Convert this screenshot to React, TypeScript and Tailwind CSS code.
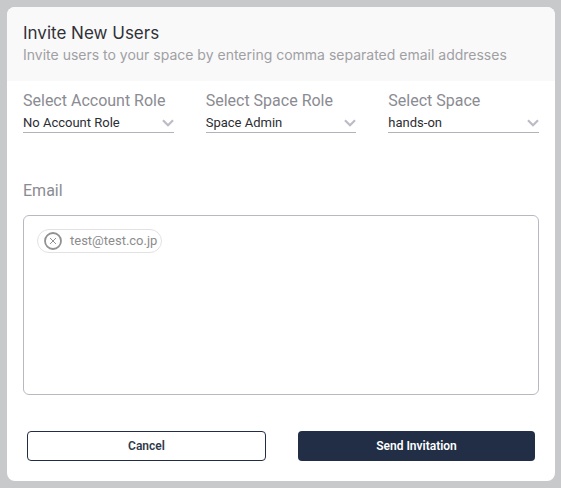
import { useState } from "react";

type RoleSelectProps = { id: string; label: string; options: string[] };

function RoleSelect({ id, label, options }: RoleSelectProps) {
  return (
    <div className="min-w-0 flex-1">
      <label htmlFor={id} className="block text-base leading-6 whitespace-nowrap text-[#8b8b92]">
        {label}
      </label>
      <div className="grid items-center border-b border-[#b3b2ba]">
        <select
          id={id}
          className="col-start-1 row-start-1 h-[19px] w-full appearance-none bg-transparent pr-4 text-[13px] leading-5 text-[#2c2d33] outline-none"
        >
          {options.map((option) => (
            <option key={option}>{option}</option>
          ))}
        </select>
        <svg
          className="pointer-events-none col-start-1 row-start-1 h-2 w-3 justify-self-end"
          viewBox="0 0 12 8"
          fill="none"
          stroke="#bdbcc6"
          strokeWidth="2.2"
          aria-hidden="true"
        >
          <path d="M1 1.2 6 6.2 11 1.2" />
        </svg>
      </div>
    </div>
  );
}

export default function App() {
  const [emails, setEmails] = useState(["test@test.co.jp"]);

  return (
    <div className="min-h-screen bg-[#c8c9ca] py-[7px] pr-[6px] pl-[7px] font-['Roboto',sans-serif]">
      <main className="overflow-hidden rounded-lg bg-white pb-5">
        <header className="bg-[#f9f9f9] px-4 pt-3.5 pb-4 font-['Inter',sans-serif]">
          <h1 className="text-[17px] leading-6 text-[#303137]">Invite New Users</h1>
          <p className="text-sm leading-5 whitespace-nowrap text-[#a0a0a4]">
            Invite users to your space by entering comma separated email addresses
          </p>
        </header>

        <form className="px-4 pt-2" onSubmit={(event) => event.preventDefault()}>
          <div className="flex gap-8">
            <RoleSelect id="account-role" label="Select Account Role" options={["No Account Role", "Account Admin"]} />
            <RoleSelect id="space-role" label="Select Space Role" options={["Space Admin", "Space Member"]} />
            <RoleSelect id="space" label="Select Space" options={["hands-on"]} />
          </div>

          <label htmlFor="email" className="mt-[46px] block text-base leading-6 text-[#8b8b92]">
            Email
          </label>
          <div className="mt-3 flex min-h-[180px] flex-wrap content-start items-start gap-2 rounded-md border border-[#b9b8c2] p-[13px]">
            {emails.map((email) => (
              <span
                key={email}
                className="flex h-6 items-center gap-2 rounded-full border border-[#e2e2e2] pr-1 pl-1.5 text-[13px] leading-5 text-[#8c8c8c]"
              >
                <button
                  type="button"
                  aria-label={`Remove ${email}`}
                  onClick={() => setEmails(emails.filter((item) => item !== email))}
                >
                  <svg className="block size-[18px]" viewBox="0 0 18 18" fill="none" stroke="#929292" aria-hidden="true">
                    <circle cx="9" cy="9" r="8" strokeWidth="1.8" />
                    <path d="m6 6 6 6m0-6-6 6" strokeWidth="1" />
                  </svg>
                </button>
                {email}
              </span>
            ))}
            <input id="email" type="text" className="h-6 min-w-0 flex-1 bg-transparent text-[13px] outline-none" />
          </div>

          <div className="mt-9 flex gap-8 px-1 text-xs font-semibold">
            <button type="button" className="h-[30px] flex-1 rounded-sm border border-[#212e46] bg-white text-[#303a4c]">
              Cancel
            </button>
            <button type="submit" className="h-[30px] flex-1 rounded-sm bg-[#212e46] text-white">
              Send Invitation
            </button>
          </div>
        </form>
      </main>
    </div>
  );
}
